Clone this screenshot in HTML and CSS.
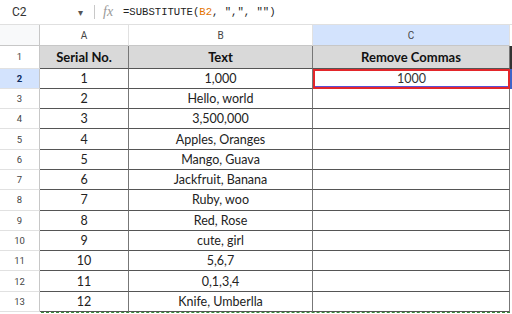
FILE: index.html
```html
<!DOCTYPE html>
<html lang="en">
<head>
    <meta charset="UTF-8">
    <title>Remove Commas</title>
    <link rel="stylesheet" href="styles.css">
</head>
<body>
    <div class="formula-bar">
        <div class="name-box">C2</div>
        <span class="caret">&#9662;</span>
        <span class="divider"></span>
        <span class="fx">fx</span>
        <div class="formula">=SUBSTITUTE(<span class="ref">B2</span>, ",", "")</div>
    </div>

    <div class="sheet">
        <!-- column headers -->
        <div class="corner"></div>
        <div class="col-head">A</div>
        <div class="col-head">B</div>
        <div class="col-head active">C</div>
        <div class="edge"></div>

        <!-- header row -->
        <div class="row-head">1</div>
        <div class="cell title">Serial No.</div>
        <div class="cell title">Text</div>
        <div class="cell title">Remove Commas</div>
        <div class="edge dark"></div>

        <div class="row-head active">2</div>
        <div class="cell">1</div>
        <div class="cell">1,000</div>
        <div class="cell selected">1000</div>
        <div class="edge blue"></div>

        <div class="row-head">3</div><div class="cell">2</div><div class="cell">Hello, world</div><div class="cell"></div><div class="edge"></div>
        <div class="row-head">4</div><div class="cell">3</div><div class="cell">3,500,000</div><div class="cell"></div><div class="edge"></div>
        <div class="row-head">5</div><div class="cell">4</div><div class="cell">Apples, Oranges</div><div class="cell"></div><div class="edge"></div>
        <div class="row-head">6</div><div class="cell">5</div><div class="cell">Mango, Guava</div><div class="cell"></div><div class="edge"></div>
        <div class="row-head">7</div><div class="cell">6</div><div class="cell">Jackfruit, Banana</div><div class="cell"></div><div class="edge"></div>
        <div class="row-head">8</div><div class="cell">7</div><div class="cell">Ruby, woo</div><div class="cell"></div><div class="edge"></div>
        <div class="row-head">9</div><div class="cell">8</div><div class="cell">Red, Rose</div><div class="cell"></div><div class="edge"></div>
        <div class="row-head">10</div><div class="cell">9</div><div class="cell">cute, girl</div><div class="cell"></div><div class="edge"></div>
        <div class="row-head">11</div><div class="cell">10</div><div class="cell">5,6,7</div><div class="cell"></div><div class="edge"></div>
        <div class="row-head">12</div><div class="cell">11</div><div class="cell">0,1,3,4</div><div class="cell"></div><div class="edge"></div>
        <div class="row-head">13</div><div class="cell">12</div><div class="cell">Knife, Umberlla</div><div class="cell"></div><div class="edge"></div>
    </div>
    <div class="bottom-line"></div>
</body>
</html>
```

FILE: styles.css
```css
body {
    margin: 0;
    width: 512px;
    height: 314px;
    overflow: hidden;
    background-color: #fff;
    font-family: Lato, "Open Sans", sans-serif;
    color: #222;
}
.formula-bar {
    height: 25px;
    display: flex;
    align-items: center;
    border-bottom: 1px solid #e0e0e0;
    box-sizing: border-box;
    font-family: Roboto, Arial, sans-serif;
    font-size: 12px;
    color: #333;
}
.name-box {
    width: 66px;
    padding-left: 12px;
}
.caret {
    font-size: 10px;
    color: #555;
    width: 16px;
}
.divider {
    width: 1px;
    height: 14px;
    background-color: #c8c8c8;
    margin-right: 8px;
}
.fx {
    font-family: "Liberation Serif", serif;
    font-style: italic;
    font-size: 14px;
    color: #999;
    width: 20px;
}
.formula {
    font-family: "Liberation Mono", monospace;
    font-size: 10.6px;
    color: #222;
}
.ref {
    color: #e37400;
}
.sheet {
    display: grid;
    grid-template-columns: 40px 89px 184px 197px 2px;
    grid-template-rows: 21px 22.5px repeat(12, 20.3px);
}
.corner {
    background-color: #f8f9fa;
    border-right: 1px solid #c7c7c7;
    border-bottom: 1px solid #c7c7c7;
}
.col-head {
    background-color: #fff;
    border-right: 1px solid #e1e1e1;
    border-bottom: 1px solid #c7c7c7;
    font-family: Roboto, Arial, sans-serif;
    font-size: 10px;
    color: #444;
    display: flex;
    align-items: center;
    justify-content: center;
}
.col-head.active {
    background-color: #d3e3fd;
}
.row-head {
    border-right: 1px solid #c7c7c7;
    border-bottom: 1px solid #e1e1e1;
    font-family: Roboto, Arial, sans-serif;
    font-size: 9.5px;
    color: #444;
    display: flex;
    align-items: center;
    justify-content: center;
}
.row-head.active {
    background-color: #d3e3fd;
    font-weight: bold;
    color: #0b2a60;
}
.cell {
    border-right: 1px solid #777;
    border-bottom: 1px solid #555;
    font-size: 12.5px;
    display: flex;
    align-items: center;
    justify-content: center;
    box-sizing: border-box;
}
.cell.title {
    background-color: #d9d9d9;
    font-weight: bold;
    font-size: 13px;
    color: #111;
}
.cell.selected {
    border: 2px solid #e3262a;
    box-shadow: inset 0 -1px 0 #5b4fd6;
    color: #333;
}
.edge {
    background-color: #fff;
}
.edge.dark {
    background-color: #333;
}
.edge.blue {
    background-color: #3e64c8;
}
.bottom-line {
    margin-left: 41px;
    width: 469px;
    border-top: 1px dashed #3a8a3a;
}
```
